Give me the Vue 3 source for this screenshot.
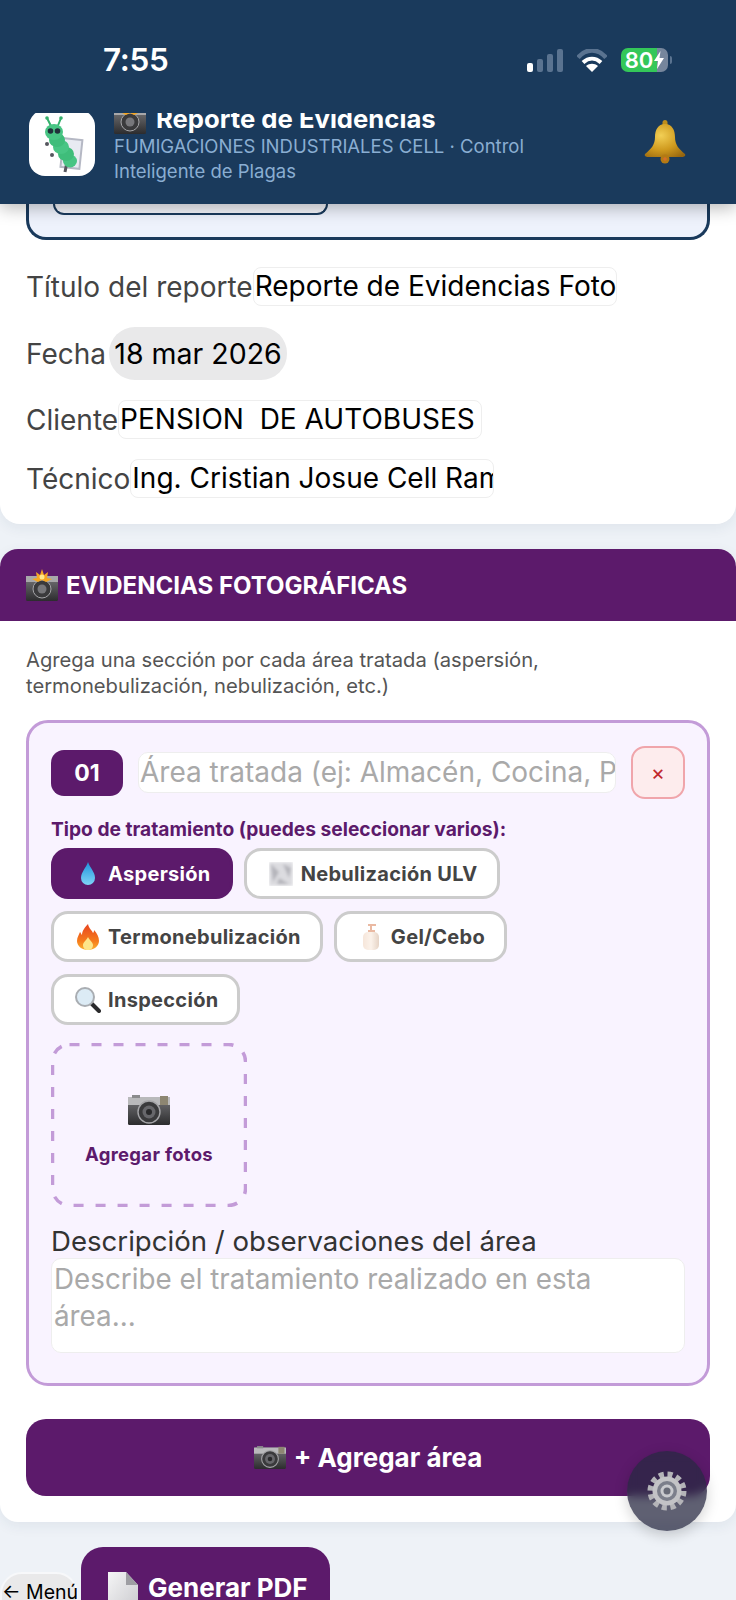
<script setup>
const rows = [
  { label: 'Cliente', value: 'PENSION  DE AUTOBUSES' },
  { label: 'Técnico', value: 'Ing. Cristian Josue Cell Ram' },
]
const chips = [
  { text: 'Aspersión', icon: 'drop', on: true },
  { text: 'Nebulización ULV', icon: 'fog' },
  { text: 'Termonebulización', icon: 'fire' },
  { text: 'Gel/Cebo', icon: 'bottle' },
  { text: 'Inspección', icon: 'lens' },
]
</script>

<template>
  <div class="app">
    <svg class="defs" aria-hidden="true">
      <defs>
        <linearGradient id="camBody" x1="0" y1="0" x2="0" y2="1"><stop offset="0" stop-color="#77777a"/><stop offset="1" stop-color="#2c2c2e"/></linearGradient>
        <linearGradient id="dropG" x1="0" y1="0" x2="0" y2="1"><stop offset="0" stop-color="#1f93dc"/><stop offset="1" stop-color="#7fd4f7"/></linearGradient>
        <linearGradient id="fireG" x1="0" y1="0" x2="0" y2="1"><stop offset="0" stop-color="#e8431f"/><stop offset=".65" stop-color="#f57b1c"/><stop offset="1" stop-color="#fbb12e"/></linearGradient>
        <linearGradient id="bottleG" x1="0" y1="0" x2="1" y2="0"><stop offset="0" stop-color="#f6e6da"/><stop offset=".5" stop-color="#fbf2ea"/><stop offset="1" stop-color="#e6d4c6"/></linearGradient>
        <radialGradient id="bellG" cx=".4" cy=".35" r=".8"><stop offset="0" stop-color="#f2cf55"/><stop offset=".55" stop-color="#cf9a1e"/><stop offset="1" stop-color="#96650f"/></radialGradient>
        <linearGradient id="docG" x1="0" y1="0" x2="1" y2="1"><stop offset="0" stop-color="#f5f5f6"/><stop offset="1" stop-color="#c9c9cd"/></linearGradient>
        <filter id="soft"><feGaussianBlur stdDeviation="1.6"/></filter>
        <symbol id="i-camera" viewBox="0 0 42 30">
          <rect y="2" width="42" height="28" rx="1.500" fill="url(#camBody)"/>
          <rect y="2" width="42" height="8" fill="#b9b9bb"/>
          <rect x="4" y="0" width="8" height="3" fill="#8b8b8d"/>
          <rect x="32" y="1" width="8" height="9" fill="#8d8672"/>
          <circle cx="21" cy="17" r="11" fill="#3a3a3c" stroke="#a5a5a8" stroke-width="1.400"/>
          <circle cx="21" cy="17" r="6.500" fill="#67676b"/>
          <circle cx="21" cy="17" r="3" fill="#29292b"/>
        </symbol>
        <symbol id="i-flash" viewBox="0 0 32 32">
          <rect y="7" width="32" height="25" rx="1.500" fill="url(#camBody)"/>
          <rect y="7" width="32" height="6" fill="#a8a8aa"/>
          <circle cx="16" cy="20" r="9" fill="#3a3a3c" stroke="#a5a5a8"/>
          <circle cx="16" cy="20" r="4.500" fill="#77777b"/>
          <path d="M16 0l2 6 4-3-1 6 5 1-6 3-4-2-4 2-6-3 5-1-1-6 4 3z" fill="#f5a623"/>
          <circle cx="16" cy="8" r="2.500" fill="#ffe98a"/>
        </symbol>
        <symbol id="i-drop" viewBox="0 0 16 24"><path d="M8 0c2 6 7 10 7 16a7 7 0 0 1-14 0C1 10 6 6 8 0z" fill="url(#dropG)"/></symbol>
        <symbol id="i-fog" viewBox="0 0 24 24"><g filter="url(#soft)"><rect width="24" height="24" fill="#dcdce0"/><path d="M2 2l8 8-6 10zM14 2l8 4-2 10zM10 16l10 6H8z" fill="#b4b4ba"/></g></symbol>
        <symbol id="i-fire" viewBox="0 0 22 26">
          <path d="M11 0c1 5 4 6 5 9 1-1 1-2 1-3 3 3 5 7 5 11 0 5-5 9-11 9S0 22 0 17c0-4 2-6 3-9 1 1 1 2 2 3 0-4 3-8 6-11z" fill="url(#fireG)"/>
          <path d="M11 13c1 3 5 5 5 8 0 3-2 5-5 5s-5-2-5-5c0-3 4-5 5-8z" fill="#fde58a"/>
        </symbol>
        <symbol id="i-bottle" viewBox="0 0 18 26">
          <path d="M6 0h8v2h-4v4h3v3H6V6h2V2H6z" fill="#eab9a2"/>
          <rect x="1" y="8" width="16" height="18" rx="5" fill="url(#bottleG)"/>
        </symbol>
        <symbol id="i-lens" viewBox="0 0 26 26">
          <path d="M16 16l8 8" stroke="#2a2a2c" stroke-width="4" stroke-linecap="round"/>
          <circle cx="10" cy="10" r="9" fill="#dcebf5" stroke="#a9adb2" stroke-width="2"/>
        </symbol>
        <symbol id="i-bell" viewBox="0 0 42 44">
          <rect x="18.500" y="0" width="5" height="7" rx="2.500" fill="#c08e1a"/>
          <path d="M21 4c7 0 10 6 10 13 0 8 4 12 10 17 1 2-1 3-3 3H4c-2 0-4-1-3-3 6-5 10-9 10-17 0-7 3-13 10-13z" fill="url(#bellG)"/>
          <circle cx="21" cy="39" r="4.500" fill="#b37a14"/>
          <circle cx="21" cy="39" r="1.800" fill="#d96b2a"/>
        </symbol>
        <symbol id="i-gear" viewBox="0 0 40 40">
          <circle cx="20" cy="20" r="16.500" fill="none" stroke="#b4b4b8" stroke-width="6" stroke-dasharray="5 3.640"/>
          <circle cx="20" cy="20" r="14.500" fill="#c3c3c6"/>
          <circle cx="20" cy="20" r="10" fill="#7c7f8b"/>
          <circle cx="20" cy="20" r="6.500" fill="#c9cace"/>
          <circle cx="20" cy="20" r="3.500" fill="#686b77"/>
        </symbol>
        <symbol id="i-doc" viewBox="0 0 30 40">
          <path d="M0 0h18l12 13v27H0z" fill="url(#docG)"/>
          <path d="M18 0l12 13H18z" fill="#9e9ea3"/>
        </symbol>
      </defs>
    </svg>

    <header class="top">
      <div class="status">
        <span class="clock">7:55</span>
        <div class="sys">
          <div class="signal"><i class="b1"></i><i class="b2"></i><i class="b3"></i><i class="b4"></i></div>
          <svg class="wifi" viewBox="0 0 30 23">
            <path d="M1 8.500C9-1 21-1 29 8.500" fill="none" stroke="#5a7390" stroke-width="4.500"/>
            <path d="M6 13.500c5.500-5 12.500-5 18 0" fill="none" stroke="#fff" stroke-width="4"/>
            <path d="M15 23l-6-6c3.500-3 8.500-3 12 0z" fill="#fff"/>
          </svg>
          <div class="battery">
            <span class="pct">80</span>
            <svg class="bolt" viewBox="0 0 10 18"><path d="M6.500 0L0 10h4l-1 8 7-11H5.500z" fill="#fff"/></svg>
          </div>
          <i class="tip"></i>
        </div>
      </div>
      <div class="brand">
        <div class="logo">
          <svg viewBox="0 0 66 66" width="66" height="66">
            <rect x="33" y="29" width="19" height="29" fill="#e8eaf2" stroke="#b5b8c4" stroke-width="2" transform="rotate(6 42 43)"/>
            <path d="M36 62l4-20" stroke="#55565e" stroke-width="3"/>
            <path d="M23 18l-5-10M28 18l4-10" stroke="#35b06c" stroke-width="2" stroke-linecap="round"/>
            <circle cx="18" cy="8" r="1.800" fill="#35b06c"/>
            <circle cx="32" cy="8" r="1.800" fill="#35b06c"/>
            <ellipse cx="41" cy="51" rx="7" ry="6.500" fill="#48c584"/>
            <ellipse cx="37" cy="44" rx="8" ry="7" fill="#3fbd7a"/>
            <ellipse cx="32" cy="37" rx="8" ry="7" fill="#48c584"/>
            <ellipse cx="28" cy="30" rx="8" ry="7" fill="#3fbd7a"/>
            <ellipse cx="25" cy="22" rx="9" ry="8" fill="#48c584"/>
            <circle cx="21.500" cy="21" r="2.800" fill="#20303a"/>
            <circle cx="28.500" cy="21" r="2.800" fill="#20303a"/>
            <circle cx="18" cy="34" r="2" fill="#55565e"/>
            <circle cx="23" cy="45" r="2" fill="#55565e"/>
          </svg>
        </div>
        <div class="brand-text">
          <div class="title"><svg class="ti"><use href="#i-flash"/></svg>Reporte de Evidencias</div>
          <div class="sub">FUMIGACIONES INDUSTRIALES CELL · Control Inteligente de Plagas</div>
        </div>
        <svg class="bell"><use href="#i-bell"/></svg>
      </div>
    </header>

    <section class="card first">
      <div class="info"><div class="pill"></div></div>
      <div class="row r-title">
        <span class="lbl">Título del reporte</span>
        <div class="field">Reporte de Evidencias Foto</div>
      </div>
      <div class="row r-date">
        <span class="lbl">Fecha</span>
        <div class="date">18 mar 2026</div>
      </div>
      <div v-for="r in rows" :key="r.label" class="row r-plain">
        <span class="lbl">{{ r.label }}</span>
        <div class="field">{{ r.value }}</div>
      </div>
    </section>

    <section class="card second">
      <h2 class="band"><svg class="band-ic"><use href="#i-flash"/></svg>EVIDENCIAS FOTOGRÁFICAS</h2>
      <div class="inner">
        <p class="hint">Agrega una sección por cada área tratada (aspersión, termonebulización, nebulización, etc.)</p>
        <div class="area">
          <div class="area-head">
            <span class="num">01</span>
            <div class="field area-name">Área tratada (ej: Almacén, Cocina, P</div>
            <button class="del">×</button>
          </div>
          <div class="tipo">Tipo de tratamiento (puedes seleccionar varios):</div>
          <div class="chips">
            <button v-for="c in chips" :key="c.text" class="chip" :class="{ on: c.on }">
              <span class="slot"><svg :class="'ic-' + c.icon"><use :href="'#i-' + c.icon"/></svg></span>{{ c.text }}
            </button>
          </div>
          <div class="upload">
            <svg class="dash" viewBox="0 0 196 164"><rect x="1.500" y="1.500" width="193" height="161" rx="17"/></svg>
            <svg class="up-ic"><use href="#i-camera"/></svg>
            <span>Agregar fotos</span>
          </div>
          <div class="desc-l">Descripción / observaciones del área</div>
          <div class="desc">Describe el tratamiento realizado en esta área...</div>
        </div>
        <button class="add"><svg class="add-ic"><use href="#i-camera"/></svg>+ Agregar área</button>
      </div>
    </section>

    <div class="foot">
      <button class="back">← Menú</button>
      <button class="pdf"><svg class="doc"><use href="#i-doc"/></svg>Generar PDF</button>
    </div>

    <button class="fab"><svg class="gear"><use href="#i-gear"/></svg></button>
  </div>
</template>

<style>
html, body { margin: 0; background: #eef2f7; }
</style>

<style scoped>
.app {
  position: relative;
  width: 736px;
  height: 1600px;
  overflow: hidden;
  background: #eef2f7;
  font-family: Inter, "Noto Sans", sans-serif;
}
.defs { position: absolute; width: 0; height: 0; }
button { font-family: inherit; border: 0; padding: 0; }

.top {
  position: relative;
  z-index: 2;
  height: 204px;
  background: #1a3a5c;
  box-shadow: 0 4px 16px rgba(0, 0, 0, .28);
}
.status {
  height: 113px;
  box-sizing: border-box;
  padding: 44px 64px 0 103px;
  display: flex;
  justify-content: space-between;
  align-items: flex-start;
}
.clock { color: #fff; font-size: 31.500px; line-height: 32px; font-weight: 600; letter-spacing: -.3px; }
.sys { display: flex; align-items: center; height: 24px; margin-top: 4px; }
.signal { display: flex; align-items: flex-end; gap: 4px; height: 23px; }
.signal i { display: block; width: 6px; border-radius: 2px; background: #5a7390; }
.signal .b1 { height: 9px; background: #fff; }
.signal .b2 { height: 13px; }
.signal .b3 { height: 18px; }
.signal .b4 { height: 23px; }
.wifi { width: 30px; height: 23px; margin-left: 14px; }
.battery {
  width: 47px;
  height: 24px;
  margin-left: 14px;
  border-radius: 7px;
  background: linear-gradient(90deg, #34c759 36px, #76869c 36px);
  color: #fff;
  display: flex;
  align-items: center;
  justify-content: center;
  gap: 1px;
}
.pct { font-size: 22px; font-weight: 600; line-height: 24px; }
.bolt { width: 10px; height: 18px; }
.tip { display: block; width: 2px; height: 8px; margin-left: 2px; border-radius: 0 2px 2px 0; background: #5a7390; }

.brand {
  height: 91px;
  overflow: hidden;
  display: flex;
  align-items: flex-start;
  padding: 0 50px 0 29px;
}
.logo {
  flex: none;
  width: 66px;
  height: 66px;
  margin-top: -3px;
  border-radius: 16px;
  overflow: hidden;
  background: #fff;
}
.brand-text { flex: 1; margin-left: 19px; }
.title {
  margin-top: -9px;
  display: flex;
  align-items: center;
  color: #fff;
  font-size: 25.700px;
  line-height: 28px;
  font-weight: 700;
}
.ti { width: 32px; height: 32px; margin: -2px 10px 0 0; }
.sub {
  margin-top: 0;
  width: 440px;
  color: #8aaed2;
  font-size: 18.500px;
  line-height: 25px;
}
.bell { flex: none; width: 42px; height: 44px; margin-top: 7px; }

.card {
  background: #fff;
  border-radius: 18px;
  box-shadow: 0 4px 14px rgba(26, 58, 92, .07);
}
.first {
  height: 320px;
  box-sizing: border-box;
  padding: 0 26px;
  border-radius: 0 0 20px 20px;
}
.info {
  height: 36px;
  box-sizing: border-box;
  border: 3px solid #1a3a5c;
  border-top: 0;
  border-radius: 0 0 20px 20px;
  background: #eef2fc;
  padding-left: 24px;
}
.pill {
  width: 275px;
  height: 11px;
  box-sizing: border-box;
  border: 2px solid #1a3a5c;
  border-top: 0;
  border-radius: 0 0 14px 14px;
  background: #f3f4fa;
}
.row { display: flex; align-items: center; font-size: 28px; }
.r-title { margin-top: 27px; }
.r-date { margin-top: 21px; }
.r-plain { margin-top: 20px; }
.lbl { color: #444; white-space: nowrap; }
.field {
  width: 364px;
  height: 39px;
  box-sizing: border-box;
  padding: 0 1px;
  border: 1px solid #eee;
  border-radius: 8px;
  background: #fff;
  color: #000;
  font-size: 28px;
  line-height: 37px;
  white-space: pre;
  overflow: hidden;
}
.date {
  width: 178px;
  height: 53px;
  margin-left: 3px;
  border-radius: 26px;
  background: #e9e9ea;
  color: #000;
  font-size: 28.500px;
  line-height: 53px;
  text-align: center;
  white-space: nowrap;
}

.second {
  height: 973px;
  margin-top: 25px;
  overflow: hidden;
}
.band {
  height: 72px;
  margin: 0;
  box-sizing: border-box;
  padding: 0 26px;
  display: flex;
  align-items: center;
  background: #5c1a6b;
  color: #fff;
  font-size: 24px;
  font-weight: 700;
}
.band-ic { width: 32px; height: 32px; margin-right: 8px; }
.inner { padding: 26px 26px 0; }
.hint {
  margin: 0;
  color: #555;
  font-size: 20.200px;
  line-height: 26px;
}
.area {
  height: 666px;
  box-sizing: border-box;
  margin: 21px 0 33px;
  padding: 23px 22px 0;
  border: 3px solid #c39bd8;
  border-radius: 22px;
  background: #f9f3ff;
}
.area-head { display: flex; align-items: center; gap: 15px; }
.num {
  flex: none;
  width: 72px;
  height: 46px;
  border-radius: 13px;
  background: #5c1a6b;
  color: #fff;
  font-size: 23px;
  font-weight: 700;
  line-height: 46px;
  text-align: center;
}
.area-name {
  flex: 1;
  width: 0;
  font-size: 28px;
  line-height: 39px;
  height: 41px;
  color: #a9a9a9;
  border-radius: 10px;
}
.del {
  flex: none;
  width: 54px;
  height: 53px;
  box-sizing: border-box;
  border: 2px solid #f0a5ab;
  border-radius: 14px;
  background: #fdeced;
  color: #c0272d;
  font-size: 21px;
}
.tipo {
  margin-top: 18px;
  color: #5c1a6b;
  font-size: 19.200px;
  line-height: 24px;
  font-weight: 700;
}
.chips { display: flex; flex-wrap: wrap; gap: 12px 11px; margin-top: 7px; width: 500px; }
.chip {
  height: 51px;
  box-sizing: border-box;
  padding: 0 19px;
  display: flex;
  align-items: center;
  border: 3px solid #ccc;
  border-radius: 17px;
  background: #fff;
  color: #444;
  font-size: 20px;
  letter-spacing: .3px;
  font-weight: 700;
  white-space: nowrap;
}
.chip.on { background: #5c1a6b; border-color: #5c1a6b; color: #fff; }
.slot { flex: none; width: 30px; padding-right: 2px; margin-right: 3px; display: flex; justify-content: center; align-items: center; }
.ic-drop { width: 16px; height: 24px; }
.ic-fog { width: 24px; height: 24px; }
.ic-fire { width: 22px; height: 26px; }
.ic-bottle { width: 18px; height: 26px; }
.ic-lens { width: 26px; height: 26px; }
.upload {
  position: relative;
  width: 196px;
  height: 164px;
  box-sizing: border-box;
  margin-top: 18px;
  display: flex;
  flex-direction: column;
  align-items: center;
  color: #5c1a6b;
  font-size: 18.500px;
  letter-spacing: .3px;
  font-weight: 700;
}
.dash { position: absolute; inset: 0; width: 196px; height: 164px; }
.dash rect { fill: none; stroke: #c39bd8; stroke-width: 3.500; stroke-dasharray: 10 12; }
.up-ic { width: 42px; height: 30px; margin-top: 52px; margin-bottom: 18px; }
.desc-l {
  margin-top: 17px;
  color: #333;
  font-size: 27.600px;
  line-height: 34px;
}
.desc {
  height: 95px;
  box-sizing: border-box;
  padding: 2px 40px 2px 2px;
  border: 1px solid #eee;
  border-radius: 10px;
  background: #fff;
  color: #a9a9a9;
  font-size: 27.800px;
  line-height: 37px;
}
.add {
  width: 684px;
  height: 77px;
  display: flex;
  align-items: center;
  justify-content: center;
  border-radius: 20px;
  background: #5c1a6b;
  color: #fff;
  font-size: 26px;
  font-weight: 700;
}
.add-ic { width: 32px; height: 23px; margin-right: 8px; }

.foot { display: flex; align-items: flex-start; padding-top: 25px; }
.back {
  width: 78px;
  height: 56px;
  margin: 25px 3px 0 0;
  box-sizing: border-box;
  border: 2px solid #f7f8fa;
  border-radius: 22px 22px 0 0;
  background: #e9e9ea;
  color: #000;
  font-size: 19.500px;
  line-height: 34px;
  padding-bottom: 16px;
  white-space: nowrap;
}
.pdf {
  width: 249px;
  height: 80px;
  display: flex;
  align-items: flex-start;
  padding: 23px 0 0 27px;
  box-sizing: border-box;
  border-radius: 22px;
  background: #5c1a6b;
  color: #fff;
  font-size: 26px;
  line-height: 36px;
  font-weight: 700;
  white-space: nowrap;
}
.doc { width: 30px; height: 40px; margin: 2px 10px 0 0; }

.fab {
  position: absolute;
  left: 627px;
  top: 1451px;
  width: 80px;
  height: 80px;
  border-radius: 50%;
  background: rgba(39, 40, 65, .74);
  backdrop-filter: blur(5px);
  box-shadow: 0 4px 14px rgba(0, 0, 0, .18);
  display: flex;
  align-items: center;
  justify-content: center;
  z-index: 3;
}
.gear { width: 40px; height: 40px; }
</style>
